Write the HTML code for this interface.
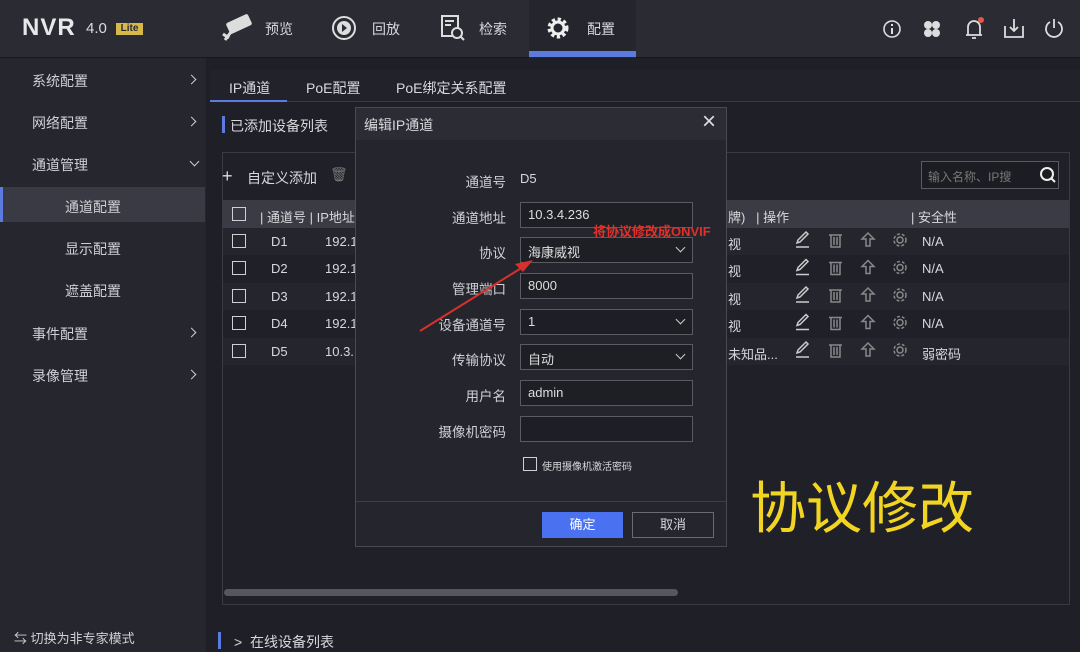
<!DOCTYPE html>
<html><head><meta charset="utf-8"><style>
*{margin:0;padding:0;box-sizing:border-box}
body{width:1080px;height:652px;overflow:hidden;background:#1f2027;font-family:"Liberation Sans","Noto Sans CJK SC",sans-serif;color:#d8d8dc;position:relative;font-size:14px}
.a{position:absolute}
.top{left:0;top:0;width:1080px;height:58px;background:#2a2b33;border-bottom:1px solid #17181d}
.side{left:0;top:58px;width:206px;height:594px;background:#26272e}
.mi{position:absolute;left:32px;font-size:14px;color:#cfcfd4}
.chev{position:absolute;left:188px;width:7px;height:7px;border-right:1.6px solid #ccc;border-bottom:1.6px solid #ccc;transform:rotate(-45deg)}
.chev.d{transform:rotate(45deg)}
.cb{position:absolute;width:14px;height:14px;border:1.5px solid #cfcfd4}
.inp{position:absolute;left:520px;width:173px;height:26px;border:1px solid #5a5b62;background:#1e1f25;color:#ddd;font-size:13px;padding:4px 7px}
.lbl{position:absolute;right:574px;font-size:13.5px;color:#cfcfd4;text-align:right}
.dd::after{content:"";position:absolute;right:8px;top:6px;width:6px;height:6px;border-right:1.5px solid #ccc;border-bottom:1.5px solid #ccc;transform:rotate(45deg)}
.row{position:absolute;left:223px;width:846px;height:27px}
.c{position:absolute;font-size:13px;color:#d8d8dc}
</style></head><body>
<div class="a top"></div>
<div class="a" style="left:22px;top:14px;font-size:24px;font-weight:bold;color:#e8e8ea;letter-spacing:1px">NVR</div>
<div class="a" style="left:86px;top:20px;font-size:15px;color:#ddd">4.0</div>
<div class="a" style="left:116px;top:23px;width:27px;height:12px;background:#d9b84a;color:#2a2b33;font-size:10px;font-weight:bold;line-height:12px;text-align:center">Lite</div>
<svg class="a" style="left:221px;top:14px" width="34" height="28" viewBox="0 0 34 28"><rect x="6" y="4" width="24" height="12" rx="2" transform="rotate(-25 18 10)" fill="#ddd"/><path d="M4 26 L10 18 M2 20 L8 24" stroke="#ddd" stroke-width="3"/></svg>
<div class="a" style="left:265px;top:19px;font-size:14px">预览</div>
<svg class="a" style="left:330px;top:14px" width="28" height="28"><circle cx="14" cy="14" r="11" fill="none" stroke="#ddd" stroke-width="2"/><circle cx="14" cy="14" r="7" fill="#ddd"/><path d="M12 10 L17 14 L12 18Z" fill="#2a2b33"/></svg>
<div class="a" style="left:372px;top:19px">回放</div>
<svg class="a" style="left:440px;top:14px" width="26" height="28"><rect x="2" y="2" width="16" height="20" fill="none" stroke="#ddd" stroke-width="2"/><path d="M5 7h9M5 11h6" stroke="#ddd" stroke-width="2"/><circle cx="17" cy="19" r="5" fill="#2a2b33" stroke="#ddd" stroke-width="2"/><path d="M20 22l4 4" stroke="#ddd" stroke-width="2"/></svg>
<div class="a" style="left:479px;top:19px">检索</div>
<div class="a" style="left:529px;top:0;width:107px;height:58px;background:#25262d"></div>
<div class="a" style="left:529px;top:51px;width:107px;height:6px;background:#5b7be0"></div>
<svg class="a" style="left:545px;top:15px" width="26" height="26" viewBox="0 0 26 26"><circle cx="13" cy="13" r="8" fill="none" stroke="#eee" stroke-width="5" stroke-dasharray="3 2.3"/><circle cx="13" cy="13" r="6" fill="none" stroke="#eee" stroke-width="3"/></svg>
<div class="a" style="left:587px;top:19px">配置</div>
<svg class="a" style="left:880px;top:17px" width="24" height="24"><circle cx="12" cy="12" r="8" fill="none" stroke="#ddd" stroke-width="1.6"/><path d="M12 11v6M12 7v2" stroke="#ddd" stroke-width="2"/></svg>
<svg class="a" style="left:920px;top:17px" width="24" height="24"><circle cx="8" cy="8" r="4" fill="#ddd"/><circle cx="16" cy="8" r="4" fill="#ddd"/><circle cx="8" cy="16" r="4" fill="#ddd"/><circle cx="16" cy="16" r="4" fill="#ddd"/></svg>
<svg class="a" style="left:961px;top:14px" width="26" height="28"><path d="M7 21V13a6 6 0 0 1 12 0v8zM5 21h16M11 24h4" fill="none" stroke="#ddd" stroke-width="1.8"/><circle cx="20" cy="6" r="3" fill="#e05a4a"/></svg>
<svg class="a" style="left:1002px;top:16px" width="24" height="24"><path d="M3 10v11h18V10M12 3v12M8 11l4 4 4-4" fill="none" stroke="#ddd" stroke-width="1.8"/></svg>
<svg class="a" style="left:1042px;top:16px" width="24" height="24"><path d="M8 6a8 8 0 1 0 8 0M12 3v9" fill="none" stroke="#ddd" stroke-width="1.8"/></svg>
<div class="a side"></div>
<div class="mi" style="top:71px">系统配置</div><div class="chev" style="top:76px"></div>
<div class="mi" style="top:113px">网络配置</div><div class="chev" style="top:118px"></div>
<div class="mi" style="top:155px">通道管理</div><div class="chev d" style="top:158px;left:191px"></div>
<div class="a" style="left:0;top:187px;width:205px;height:35px;background:#393a43;border-left:3px solid #5b7be0"></div>
<div class="mi" style="top:197px;left:65px">通道配置</div>
<div class="mi" style="top:239px;left:65px">显示配置</div>
<div class="mi" style="top:281px;left:65px">遮盖配置</div>
<div class="mi" style="top:324px">事件配置</div><div class="chev" style="top:329px"></div>
<div class="mi" style="top:366px">录像管理</div><div class="chev" style="top:371px"></div>
<div class="a" style="left:14px;top:628px;font-size:13px;color:#cfcfd4">⇆ 切换为非专家模式</div>
<div class="a" style="left:210px;top:70px;width:870px;height:32px;background:#22232a;border-bottom:1px solid #3a3b42"></div>
<div class="a" style="left:229px;top:78px;font-size:14px">IP通道</div>
<div class="a" style="left:210px;top:100px;width:77px;height:2px;background:#5b7be0"></div>
<div class="a" style="left:306px;top:78px">PoE配置</div>
<div class="a" style="left:396px;top:78px">PoE绑定关系配置</div>
<div class="a" style="left:222px;top:116px;width:3px;height:17px;background:#5b7be0"></div>
<div class="a" style="left:230px;top:116px;font-size:14px">已添加设备列表</div>
<div class="a" style="left:222px;top:152px;width:848px;height:453px;border:1px solid #3a3b42;background:#202128"></div>
<div class="a" style="left:222px;top:166px;font-size:18px;color:#ddd">+</div>
<div class="a" style="left:247px;top:168px;font-size:14px">自定义添加</div>
<div class="a" style="left:330px;top:166px;font-size:14px;color:#777">🗑</div>
<div class="a" style="left:921px;top:161px;width:138px;height:28px;border:1px solid #5a5b62;background:#1c1d23;font-size:12px;color:#777;padding:6px 6px">输入名称、IP搜</div>
<svg class="a" style="left:1038px;top:165px" width="20" height="20"><circle cx="9" cy="9" r="6" fill="none" stroke="#eee" stroke-width="2"/><path d="M13 13l4 4" stroke="#eee" stroke-width="2"/></svg>
<div class="row" style="top:200px;height:28px;background:#3a3b44"></div>
<div class="cb" style="left:232px;top:207px"></div>
<div class="c" style="left:260px;top:207px">| 通道号 | IP地址</div>
<div class="c" style="left:728px;top:207px">牌)&nbsp;&nbsp;&nbsp;| 操作</div>
<div class="c" style="left:911px;top:207px">| 安全性</div>
<div class="row" style="top:228px;background:#25262d"></div>
<div class="row" style="top:283px;background:#25262d"></div>
<div class="row" style="top:338px;background:#25262d"></div>
<div class="cb" style="left:232px;top:234px"></div><div class="c" style="left:271px;top:234px">D1</div><div class="c" style="left:325px;top:234px">192.1</div><div class="c" style="left:728px;top:234px">视</div>
<div class="cb" style="left:232px;top:261px"></div><div class="c" style="left:271px;top:261px">D2</div><div class="c" style="left:325px;top:261px">192.1</div><div class="c" style="left:728px;top:261px">视</div>
<div class="cb" style="left:232px;top:289px"></div><div class="c" style="left:271px;top:289px">D3</div><div class="c" style="left:325px;top:289px">192.1</div><div class="c" style="left:728px;top:289px">视</div>
<div class="cb" style="left:232px;top:316px"></div><div class="c" style="left:271px;top:316px">D4</div><div class="c" style="left:325px;top:316px">192.1</div><div class="c" style="left:728px;top:316px">视</div>
<div class="cb" style="left:232px;top:344px"></div><div class="c" style="left:271px;top:344px">D5</div><div class="c" style="left:325px;top:344px">10.3.</div><div class="c" style="left:728px;top:344px">未知品...</div>
<svg class="a" style="left:790px;top:228px" width="130" height="140">
<g fill="none" stroke="#ccc" stroke-width="1.5">
<g id="r"><path d="M8 12l8-8 2 2-8 8-3 1z"/><path d="M6 19h13"/><path d="M39 7h13M41 7v12h9V7M44 9v8M47 9v8" stroke="#888"/><path d="M78 5l-6 6h4v7h4v-7h4z" stroke="#888"/><circle cx="110" cy="12" r="3" stroke="#888"/><circle cx="110" cy="12" r="6" stroke="#888" stroke-dasharray="3 2"/></g>
<use href="#r" y="27.5"/><use href="#r" y="55"/><use href="#r" y="82.5"/><use href="#r" y="110"/>
</g></svg>
<div class="c" style="left:922px;top:234px">N/A</div><div class="c" style="left:922px;top:261px">N/A</div><div class="c" style="left:922px;top:289px">N/A</div><div class="c" style="left:922px;top:316px">N/A</div><div class="c" style="left:922px;top:344px">弱密码</div>
<div class="a" style="left:224px;top:589px;width:454px;height:7px;border-radius:4px;background:#55565e"></div>
<div class="a" style="left:218px;top:632px;width:3px;height:17px;background:#5b7be0"></div>
<div class="a" style="left:234px;top:632px;font-size:14px">&gt;&nbsp;&nbsp;在线设备列表</div>
<div class="a" style="left:355px;top:107px;width:372px;height:440px;background:#25262d;border:1px solid #4a4b52"></div>
<div class="a" style="left:356px;top:108px;width:370px;height:32px;background:#2b2c34"></div>
<div class="a" style="left:364px;top:115px;font-size:14px">编辑IP通道</div>
<div class="a" style="left:702px;top:108px;font-size:24px;color:#ddd">×</div>
<div class="lbl" style="top:171px">通道号</div><div class="a" style="left:520px;top:171px;font-size:13px">D5</div>
<div class="lbl" style="top:207px">通道地址</div><div class="inp" style="top:202px">10.3.4.236</div>
<div class="lbl" style="top:242px">协议</div><div class="inp dd" style="top:237px">海康威视</div>
<div class="lbl" style="top:278px">管理端口</div><div class="inp" style="top:273px">8000</div>
<div class="lbl" style="top:314px">设备通道号</div><div class="inp dd" style="top:309px">1</div>
<div class="lbl" style="top:349px">传输协议</div><div class="inp dd" style="top:344px">自动</div>
<div class="lbl" style="top:385px">用户名</div><div class="inp" style="top:380px">admin</div>
<div class="lbl" style="top:421px">摄像机密码</div><div class="inp" style="top:416px"></div>
<div class="cb" style="left:523px;top:457px"></div>
<div class="a" style="left:542px;top:458px;font-size:10px">使用摄像机激活密码</div>
<div class="a" style="left:356px;top:501px;width:370px;height:1px;background:#3e3f46"></div>
<div class="a" style="left:542px;top:512px;width:81px;height:26px;background:#4a72f0;color:#fff;text-align:center;line-height:26px;font-size:13px">确定</div>
<div class="a" style="left:632px;top:512px;width:82px;height:26px;border:1px solid #6a6b72;text-align:center;line-height:24px;font-size:13px">取消</div>
<div class="a" style="left:593px;top:221px;font-size:13px;font-weight:bold;color:#e0302a">将协议修改成ONVIF</div>
<svg class="a" style="left:415px;top:255px" width="120" height="80"><path d="M5 76L108 12" stroke="#d8302a" stroke-width="2"/><path d="M118 5l-18 4 8 8z" fill="#d8302a"/></svg>
<div class="a" style="left:750px;top:470px;font-size:56px;line-height:70px;color:#f2d422;font-family:'Noto Sans CJK SC',sans-serif">协议修改</div>
</body></html>
